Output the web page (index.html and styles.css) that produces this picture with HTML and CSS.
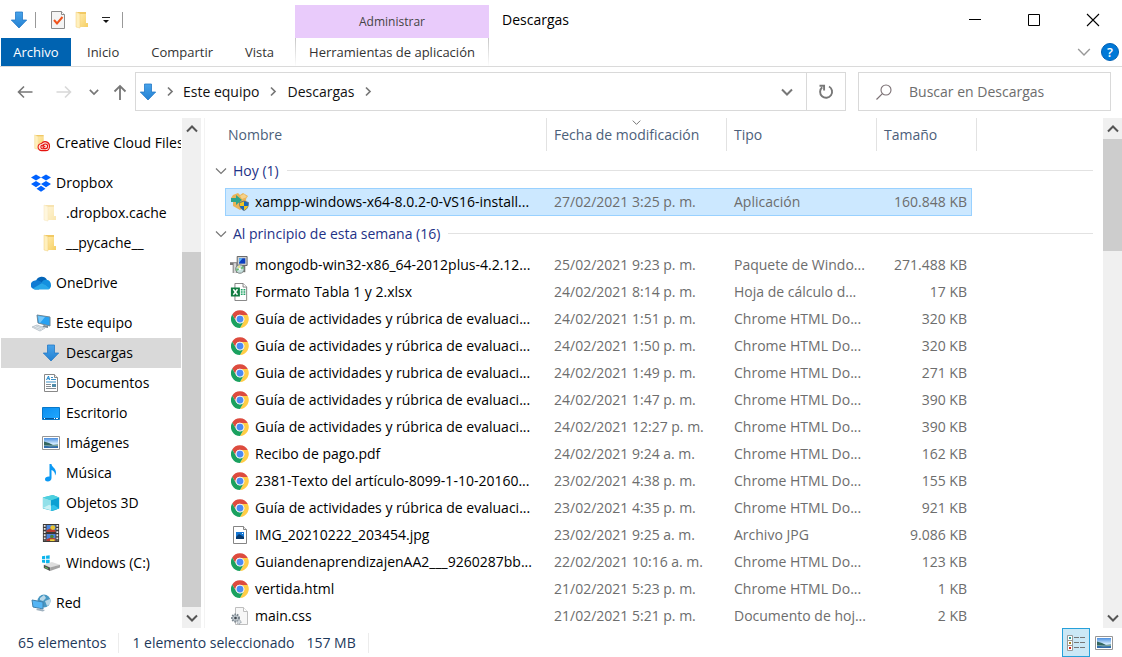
FILE: index.html
```html
<!DOCTYPE html>
<html lang="es">
<head>
<meta charset="utf-8">
<title>Descargas</title>
<meta name="viewport" content="width=device-width, initial-scale=1">
<link rel="stylesheet" href="styles.css">
</head>
<body class="window">

<svg class="sprite" aria-hidden="true">
  <defs>
    <linearGradient id="g-blue" x1="0" y1="0" x2="0" y2="1"><stop offset="0" stop-color="#48a3ea"/><stop offset="1" stop-color="#2381d2"/></linearGradient>
    <linearGradient id="g-fold" x1="0" y1="0" x2="1" y2="1"><stop offset="0" stop-color="#ffe9a6"/><stop offset="1" stop-color="#f5ce62"/></linearGradient>
    <linearGradient id="g-desk" x1="0" y1="0" x2="1" y2="1"><stop offset="0" stop-color="#0a8ef0"/><stop offset="1" stop-color="#22a9ff"/></linearGradient>
    <linearGradient id="g-sky" x1="0" y1="0" x2="0" y2="1"><stop offset="0" stop-color="#4b8fe0"/><stop offset=".6" stop-color="#d9efff"/></linearGradient>
  </defs>
  <symbol id="i-down" viewBox="0 0 18 18"><path d="M5.500 1h7v8h4.200L9 17 1.300 9h4.200z" fill="url(#g-blue)" stroke="#2379c6" stroke-width=".8"/></symbol>
  <symbol id="i-check" viewBox="0 0 16 18"><path d="M1.500.5h10l3 3v14h-13z" fill="#f4f4f4" stroke="#8c8c8c"/><path d="M11.500.5v3h3" fill="#fff" stroke="#8c8c8c"/><path d="M4 9l3 3.500L12.500 6" fill="none" stroke="#f0531c" stroke-width="2"/></symbol>
  <symbol id="i-folder" viewBox="0 0 18 18"><path d="M2 1h10v2H6z" fill="#f1c964"/><path d="M6 3h6v9h2v4H6z" fill="url(#g-fold)"/><path d="M2 1l4 2v14l-4-1z" fill="#fff0bd" stroke="#f0cf78" stroke-width=".5"/></symbol>
  <symbol id="i-cc" viewBox="0 0 20 20"><path d="M3 1h10v2H7z" fill="#f1c964"/><path d="M7 3h6v9h2v4H7z" fill="url(#g-fold)"/><path d="M3 1l4 2v14l-4-1z" fill="#fff0bd" stroke="#f0cf78" stroke-width=".5"/><g fill="none" stroke="#e5140f" stroke-width="1.200"><path d="M11 18.500a4 4 0 0 1-.5-8 5 5 0 0 1 9 3c0 3-2 5-4.500 5z" fill="#fbe6df"/><circle cx="14.800" cy="13.700" r="2.600"/><path d="M15 16.300h-3.500a1.900 1.900 0 1 1 .8-3.700l2.500 2"/></g></symbol>
  <symbol id="i-dropbox" viewBox="0 0 20 18"><g fill="#0062ff"><path d="M5 .5l5 3-5 3-5-3zM15 .5l5 3-5 3-5-3zM5 7l5 3-5 3.200-5-3.200zM15 7l5 3-5 3.200L10 10zM10 11.700l4.500 3-4.500 3-4.500-3z"/></g></symbol>
  <symbol id="i-onedrive" viewBox="0 0 20 14"><path d="M5 5a6 6 0 0 1 11-1l-3 6-8-2z" fill="#0364b8"/><path d="M4 4.500c3-1 5 .5 7 2L8 13.500H4.500A4.500 4.500 0 0 1 4 4.500z" fill="#0f7bd4"/><path d="M10.500 6.500c2-3 4-3 6-2.500 2 .3 3.500 2.500 3.500 5a4 4 0 0 1-2 4z" fill="#1490df"/><path d="M2 12.500L11 7l8 5.500c-1 1-2 1-3 1H4.500c-1 0-2-.4-2.500-1z" fill="#28a8ea"/></symbol>
  <symbol id="i-pc" viewBox="0 0 20 18"><path d="M6 1l13 2v9L7 9z" fill="#27a1f2" stroke="#6d8798"/><path d="M7 2l7 1-5 6-1-.5z" fill="#77c7f8"/><path d="M13 11l-2 2 6 1v-2z" fill="#7b8b96"/><path d="M1 13l5-2 8 3-5 3z" fill="#e9eef2" stroke="#bcc5cc"/><path d="M3 13l7 2.500M5 12l7 2.500" stroke="#b3bec6" stroke-width=".7"/></symbol>
  <symbol id="i-doc" viewBox="0 0 18 18"><path d="M2.500.5h10l3 3v14h-13z" fill="#fff" stroke="#888"/><path d="M12.500.5v3h3" fill="#eee" stroke="#888"/><path d="M4.500 6l2-4 1 4M5.500 4.700h2" stroke="#1c85cb" fill="none"/><path d="M9 3.500h2M9 5.500h5M4 8h10" stroke="#3c91c7"/><path d="M4 10.500h5M4 12.500h5M4 14.500h10" stroke="#848b91"/><path d="M10 10h4v3h-4z" fill="#4f8ba9"/></symbol>
  <symbol id="i-desktop" viewBox="0 0 18 18"><path d="M.5 3.500h17v12H.5z" fill="url(#g-desk)" stroke="#0878c9"/><path d="M1 14h16v1H1z" fill="#04569b"/><path d="M2 14.500h1M12 14.500h1M14 14.500h2" stroke="#fff"/></symbol>
  <symbol id="i-image" viewBox="0 0 18 18"><path d="M.5 2.500h17v13H.5z" fill="#fff" stroke="#969696"/><path d="M2 4h14v10H2z" fill="url(#g-sky)"/><path d="M2 7.500l5 1.500 5 2.500H2z" fill="#34665f"/><path d="M2 11.500l14-1V14H2z" fill="#316cab"/><path d="M2 11l7 .5 7-1v1.500l-8 .5-6-1z" fill="#85a992"/></symbol>
  <symbol id="i-music" viewBox="0 0 18 18"><path d="M7.500 0h2c0 3 4.500 4 4.500 8.500 0 1-.3 2-1 3 .3-3-1.200-4.500-3.500-5.500v8c0 2-1.600 3.500-3.800 3.500C4.200 17.500 3 16.700 3 15.300c0-2 2-3 4.500-2.800z" fill="#0b99f4"/></symbol>
  <symbol id="i-cube" viewBox="0 0 20 20"><path d="M1 4l11-3 7 3v12l-7 3-11-3z" fill="#36bad2"/><path d="M1 4l9 3v11l-9-2.500z" fill="#91e0e9"/><path d="M10 7l9-3v12l-9 2.500z" fill="#0ba0d3"/><path d="M1 4l11-3 7 3-9 3z" fill="#4cd0df"/><path d="M1 15.500L8 12l2 1v5z" fill="#c9f1f4"/><path d="M10 13l3-1 6 4-9 2.500z" fill="#32c2ea"/></symbol>
  <symbol id="i-video" viewBox="0 0 18 20"><path d="M0 0h18v20H0z" fill="#3c3938"/><path d="M4 1h10v8H4zM4 11h10v8H4z" fill="#4c85dc"/><path d="M4 7l4-2 6 2v2H4zM4 17l5-2 5 1v3H4z" fill="#b83c2e"/><circle cx="11" cy="4" r="2.700" fill="#e8c32e"/><circle cx="10" cy="14" r="2" fill="#4b8435"/><path d="M8 17h5v2H8z" fill="#ead73b"/><path d="M2 1v18M16 1v18" stroke="#e8e8e8" stroke-width="2" stroke-dasharray="2 1.500"/></symbol>
  <symbol id="i-drive" viewBox="0 0 20 18"><path d="M0 1.500L3.500 1v3.500H0zM4.500.9L8.500.4v4h-4zM0 5.500h3.500V9L0 8.500zM4.500 5.500h4v4.200l-4-.5z" fill="#0cb4ec"/><path d="M2 11l9-3 9 3-11 3.500z" fill="#dedede"/><path d="M2 11l7 3V18l-7-3.500z" fill="#505050"/><path d="M9 14L20 11v3L9 18z" fill="#a3a3a3"/><path d="M3.500 13.700l3 1.500" stroke="#5fe151"/></symbol>
  <symbol id="i-net" viewBox="0 0 20 18"><circle cx="13" cy="7" r="6.500" fill="#4897c2"/><path d="M9 4l4-3 2 3-3 3-3-1zM14 7l5-2v5l-3 2z" fill="#bad8e8"/><path d="M1 6l11 2v7L2 13z" fill="#55b5f4" stroke="#4080ac"/><path d="M7 14l-2 2 7 1.500 2-1.500-4-1z" fill="#9fb1bf"/></symbol>
  <symbol id="i-xampp" viewBox="0 0 18 18"><path d="M2 2l5-2 2 2 3-2 5 3-2 3 1 7-7 4-7-4V7L0 5z" fill="#e9b458"/><path d="M9 3l4-2 3 3-5 2z" fill="#f5d28b"/><path d="M0 5h5V2l6 5-6 5V9H0z" fill="#2ca58d"/><path d="M13 8l4.500 1.500c0 4-1 6.500-4.500 8-3.500-1.500-4.500-4-4.500-8z" fill="#1768ba" stroke="#5c6a75" stroke-width=".7"/><path d="M13 8.500V13H9l-.3-3zM13 13h4c-.5 2-2 3.500-4 4.200z" fill="#f2c522"/></symbol>
  <symbol id="i-msi" viewBox="0 0 20 20"><path d="M8 .5h11v10H8z" fill="#d0d0cf" stroke="#575757"/><path d="M10 2.500h7v6h-7z" fill="#0b3fc0"/><path d="M10 2.500h4l-4 5z" fill="#5cb8fa"/><path d="M0 7h8v12H3V10H0z" fill="#777"/><path d="M4 8h3v11H4z" fill="#d5d5d5"/><path d="M13 11h4v7h-4z" fill="#74746f"/><circle cx="11" cy="14.500" r="4.700" fill="#c5dfdd" stroke="#737c79"/><path d="M11 14.500l3-3.500 1.500 3zM11 14.500L7 17v-3z" fill="#65b96f"/><path d="M11 14.500V10l-3 2z" fill="#ece28f"/><circle cx="11" cy="14.500" r="1.200" fill="#fff"/></symbol>
  <symbol id="i-xls" viewBox="0 0 18 20"><path d="M4.500.5h9l4 4v15h-13z" fill="#fff" stroke="#777"/><path d="M13.500.5v4h4" fill="#fff" stroke="#777"/><path d="M0 5h10v10H0z" fill="#107c41"/><path d="M2.700 7l4.600 6M7.300 7l-4.600 6" stroke="#fff" stroke-width="1.600"/><path d="M11 7.500h2M14 7.500h2M11 10h2M14 10h2M11 12.500h2M14 12.500h2" stroke="#21a366" stroke-width="1.500"/></symbol>
  <symbol id="i-chrome" viewBox="0 0 48 48"><circle cx="24" cy="24" r="24" fill="#fff"/><path d="M3.200 12A24 24 0 0 1 44.800 13H24a11 11 0 0 0-10.400 17z" fill="#dd4b3e"/><path d="M44.800 13A24 24 0 0 1 24 48l10.400-18A12 12 0 0 0 24 13z" fill="#ffcd46"/><path d="M24 48A24 24 0 0 1 3.200 12l10.400 18A12 12 0 0 0 34.400 30z" fill="#1aa15f"/><circle cx="24" cy="24" r="11.500" fill="#f1f1f1"/><circle cx="24" cy="24" r="9" fill="#4a8af4"/></symbol>
  <symbol id="i-jpg" viewBox="0 0 18 18"><path d="M2.500.5h10l3 3v14h-13z" fill="#fff" stroke="#858585"/><path d="M12.500.5v3h3" fill="#eee" stroke="#858585"/><path d="M5 6h8v7H5z" fill="#1577d4"/><path d="M5 11l3-3 5 3v2H5z" fill="#083b70"/><path d="M11 7h1v1h-1z" fill="#fff"/></symbol>
  <symbol id="i-css" viewBox="0 0 18 18"><path d="M4.500.5h8l4 4v13h-12z" fill="#f7f7f7" stroke="#bebebe"/><path d="M12.500.5v4h4" fill="#fff" stroke="#bebebe"/><circle cx="4.500" cy="11" r="3.500" fill="#c3cbd1" stroke="#78838c" stroke-width="2" stroke-dasharray="1.500 1"/><circle cx="4.500" cy="11" r="1.300" fill="#3d454c"/><circle cx="8" cy="15" r="2" fill="#d2d9de" stroke="#88929a" stroke-dasharray="1 .8"/></symbol>
  <symbol id="i-chev-d" viewBox="0 0 12 12"><path d="M1 3.500l5 5 5-5" fill="none" stroke="currentColor" stroke-width="var(--w, 1.200)"/></symbol>
  <symbol id="i-chev-u" viewBox="0 0 12 12"><path d="M1 8.500l5-5 5 5" fill="none" stroke="currentColor" stroke-width="var(--w, 1.200)"/></symbol>
  <symbol id="i-chev-r" viewBox="0 0 8 12"><path d="M2 1.500l4 4-4 4" fill="none" stroke="currentColor" stroke-width="1.700"/></symbol>
</svg>

<header class="ribbon">
  <div class="quick">
    <svg class="ic18"><use href="#i-down"/></svg>
    <span class="bar"></span>
    <button class="plain" aria-label="Propiedades"><svg class="ic18"><use href="#i-check"/></svg></button>
    <button class="plain" aria-label="Nueva carpeta"><svg class="ic18"><use href="#i-folder"/></svg></button>
    <button class="plain" aria-label="Personalizar barra"><svg class="more" viewBox="0 0 8 8"><path d="M0 1.500h8" stroke="#222"/><path d="M1 4h6L4 7z" fill="#111"/></svg></button>
    <span class="bar"></span>
  </div>
  <div class="context-title">Administrar</div>
  <div class="caption">
    <h1 class="title">Descargas</h1>
    <div class="win-buttons">
      <button class="plain" aria-label="Minimizar"><svg class="win" viewBox="0 0 14 14"><path d="M1 6.500h12" stroke="#000"/></svg></button>
      <button class="plain" aria-label="Maximizar"><svg class="win" viewBox="0 0 14 14"><path d="M1.500 1.500h11v11h-11z" fill="none" stroke="#000"/></svg></button>
      <button class="plain" aria-label="Cerrar"><svg class="win" viewBox="0 0 14 14"><path d="M1 1l12 12M13 1L1 13" stroke="#000" stroke-width="1.100"/></svg></button>
    </div>
  </div>
  <nav class="tabs">
    <button class="tab tab-file">Archivo</button>
    <button class="tab">Inicio</button>
    <button class="tab">Compartir</button>
    <button class="tab">Vista</button>
  </nav>
  <button class="tab context-tab">Herramientas de aplicación</button>
  <div class="ribbon-end">
    <button class="plain faint" aria-label="Expandir cinta"><svg class="ic14"><use href="#i-chev-d"/></svg></button>
    <button class="help" aria-label="Ayuda">?</button>
  </div>
</header>

<div class="navbar">
  <div class="history">
    <button class="plain" aria-label="Atrás"><svg class="arrow" viewBox="0 0 16 16"><path d="M15.500 8H1.500M7 2.500L1.500 8 7 13.500" fill="none" stroke="#777" stroke-width="1.600"/></svg></button>
    <button class="plain forward" aria-label="Adelante"><svg class="arrow" viewBox="0 0 16 16"><path d="M.5 8h14M9 2.500L14.500 8 9 13.500" fill="none" stroke="#d8d8d8" stroke-width="1.600"/></svg></button>
    <button class="plain grey bold recent" aria-label="Ubicaciones recientes"><svg class="ic10"><use href="#i-chev-d"/></svg></button>
    <button class="plain" aria-label="Subir"><svg class="arrow" viewBox="0 0 16 16"><path d="M8 16V2M2.500 7.500L8 2l5.500 5.500" fill="none" stroke="#777" stroke-width="1.800"/></svg></button>
  </div>
  <div class="address">
    <svg class="ic18"><use href="#i-down"/></svg>
    <svg class="crumb-sep"><use href="#i-chev-r"/></svg>
    <a class="crumb" href="#equipo">Este equipo</a>
    <svg class="crumb-sep"><use href="#i-chev-r"/></svg>
    <a class="crumb" href="#descargas">Descargas</a>
    <svg class="crumb-sep"><use href="#i-chev-r"/></svg>
    <span class="grow"></span>
    <button class="addr-btn addr-drop bold" aria-label="Ubicaciones anteriores"><svg class="ic12"><use href="#i-chev-d"/></svg></button>
    <button class="addr-btn addr-refresh" aria-label="Actualizar"><svg class="ic16" viewBox="0 0 16 16"><path d="M4.200 3.200A6 6 0 1 0 11 2.500" fill="none" stroke="#777" stroke-width="1.900"/><path d="M1.500 1.800h4.600v4.600" fill="none" stroke="#777" stroke-width="1.900"/></svg></button>
  </div>
  <label class="search">
    <svg class="ic16" viewBox="0 0 16 16"><circle cx="10" cy="6" r="5" fill="none" stroke="#7b7074" stroke-width="1.100"/><path d="M6.400 9.600L.5 15.500" stroke="#7b7074" stroke-width="1.200"/></svg>
    <input class="search-input" type="search" placeholder="Buscar en Descargas" aria-label="Buscar en Descargas">
  </label>
</div>

<div class="body">
  <aside class="side">
    <nav class="tree" aria-label="Panel de navegación">
      <a class="node root" href="#cc"><svg class="ic20"><use href="#i-cc"/></svg>Creative Cloud Files</a>
      <a class="node root" href="#dropbox"><svg class="ic20"><use href="#i-dropbox"/></svg>Dropbox</a>
      <a class="node child" href="#cache"><svg class="ic18 dim"><use href="#i-folder"/></svg>.dropbox.cache</a>
      <a class="node child" href="#py"><svg class="ic18"><use href="#i-folder"/></svg>__pycache__</a>
      <a class="node root" href="#onedrive"><svg class="ic20"><use href="#i-onedrive"/></svg>OneDrive</a>
      <a class="node root" href="#equipo"><svg class="ic20"><use href="#i-pc"/></svg>Este equipo</a>
      <a class="node child current" href="#descargas"><svg class="ic18"><use href="#i-down"/></svg>Descargas</a>
      <a class="node child" href="#documentos"><svg class="ic18"><use href="#i-doc"/></svg>Documentos</a>
      <a class="node child" href="#escritorio"><svg class="ic18"><use href="#i-desktop"/></svg>Escritorio</a>
      <a class="node child" href="#imagenes"><svg class="ic18"><use href="#i-image"/></svg>Imágenes</a>
      <a class="node child" href="#musica"><svg class="ic18"><use href="#i-music"/></svg>Música</a>
      <a class="node child" href="#objetos"><svg class="ic18"><use href="#i-cube"/></svg>Objetos 3D</a>
      <a class="node child" href="#videos"><svg class="ic18"><use href="#i-video"/></svg>Videos</a>
      <a class="node child" href="#c"><svg class="ic18"><use href="#i-drive"/></svg>Windows (C:)</a>
      <a class="node root" href="#red"><svg class="ic20"><use href="#i-net"/></svg>Red</a>
    </nav>
    <div class="scroll scroll-side">
      <button class="scroll-btn" aria-label="Desplazar arriba"><svg class="ic12"><use href="#i-chev-u"/></svg></button>
      <span class="before"></span><span class="thumb"></span><span class="after"></span>
      <button class="scroll-btn" aria-label="Desplazar abajo"><svg class="ic12"><use href="#i-chev-d"/></svg></button>
    </div>
  </aside>

  <main class="list">
    <table class="files">
      <colgroup><col class="c-gutter"><col class="c-name"><col class="c-date"><col class="c-type"><col class="c-size"><col class="c-edge"><col></colgroup>
      <thead>
        <tr>
          <td></td>
          <th scope="col"><div class="head head-name">Nombre</div></th>
          <th scope="col"><div class="head">Fecha de modificación<svg class="sort"><use href="#i-chev-d"/></svg></div></th>
          <th scope="col"><div class="head">Tipo</div></th>
          <th scope="col"><div class="head">Tamaño</div></th>
          <td><div class="head head-edge"></div></td>
          <td></td>
        </tr>
      </thead>
      <tbody>
        <tr class="group"><th colspan="7" scope="rowgroup"><div class="group-line"><svg class="ic12"><use href="#i-chev-d"/></svg><span>Hoy (1)</span><i class="rule"></i></div></th></tr>
        <tr class="selected"><td></td><td><div class="name"><svg class="ic18"><use href="#i-xampp"/></svg>xampp-windows-x64-8.0.2-0-VS16-install...</div></td><td>27/02/2021 3:25 p. m.</td><td>Aplicación</td><td class="size">160.848 KB</td></tr>
      </tbody>
      <tbody>
        <tr class="group"><th colspan="7" scope="rowgroup"><div class="group-line"><svg class="ic12"><use href="#i-chev-d"/></svg><span>Al principio de esta semana (16)</span><i class="rule"></i></div></th></tr>
        <tr><td></td><td><div class="name"><svg class="ic20"><use href="#i-msi"/></svg>mongodb-win32-x86_64-2012plus-4.2.12...</div></td><td>25/02/2021 9:23 p. m.</td><td>Paquete de Windo...</td><td class="size">271.488 KB</td></tr>
        <tr><td></td><td><div class="name"><svg class="ic20"><use href="#i-xls"/></svg>Formato Tabla 1 y 2.xlsx</div></td><td>24/02/2021 8:14 p. m.</td><td>Hoja de cálculo d...</td><td class="size">17 KB</td></tr>
        <tr><td></td><td><div class="name"><svg class="ic18"><use href="#i-chrome"/></svg>Guía de actividades y rúbrica de evaluaci...</div></td><td>24/02/2021 1:51 p. m.</td><td>Chrome HTML Do...</td><td class="size">320 KB</td></tr>
        <tr><td></td><td><div class="name"><svg class="ic18"><use href="#i-chrome"/></svg>Guía de actividades y rúbrica de evaluaci...</div></td><td>24/02/2021 1:50 p. m.</td><td>Chrome HTML Do...</td><td class="size">320 KB</td></tr>
        <tr><td></td><td><div class="name"><svg class="ic18"><use href="#i-chrome"/></svg>Guia de actividades y rubrica de evaluaci...</div></td><td>24/02/2021 1:49 p. m.</td><td>Chrome HTML Do...</td><td class="size">271 KB</td></tr>
        <tr><td></td><td><div class="name"><svg class="ic18"><use href="#i-chrome"/></svg>Guía de actividades y rúbrica de evaluaci...</div></td><td>24/02/2021 1:47 p. m.</td><td>Chrome HTML Do...</td><td class="size">390 KB</td></tr>
        <tr><td></td><td><div class="name"><svg class="ic18"><use href="#i-chrome"/></svg>Guía de actividades y rúbrica de evaluaci...</div></td><td>24/02/2021 12:27 p. m.</td><td>Chrome HTML Do...</td><td class="size">390 KB</td></tr>
        <tr><td></td><td><div class="name"><svg class="ic18"><use href="#i-chrome"/></svg>Recibo de pago.pdf</div></td><td>24/02/2021 9:24 a. m.</td><td>Chrome HTML Do...</td><td class="size">162 KB</td></tr>
        <tr><td></td><td><div class="name"><svg class="ic18"><use href="#i-chrome"/></svg>2381-Texto del artículo-8099-1-10-20160...</div></td><td>23/02/2021 4:38 p. m.</td><td>Chrome HTML Do...</td><td class="size">155 KB</td></tr>
        <tr><td></td><td><div class="name"><svg class="ic18"><use href="#i-chrome"/></svg>Guía de actividades y rúbrica de evaluaci...</div></td><td>23/02/2021 4:35 p. m.</td><td>Chrome HTML Do...</td><td class="size">921 KB</td></tr>
        <tr><td></td><td><div class="name"><svg class="ic18"><use href="#i-jpg"/></svg>IMG_20210222_203454.jpg</div></td><td>23/02/2021 9:25 a. m.</td><td>Archivo JPG</td><td class="size">9.086 KB</td></tr>
        <tr><td></td><td><div class="name"><svg class="ic18"><use href="#i-chrome"/></svg>GuiandenaprendizajenAA2___9260287bb...</div></td><td>22/02/2021 10:16 a. m.</td><td>Chrome HTML Do...</td><td class="size">123 KB</td></tr>
        <tr><td></td><td><div class="name"><svg class="ic18"><use href="#i-chrome"/></svg>vertida.html</div></td><td>21/02/2021 5:23 p. m.</td><td>Chrome HTML Do...</td><td class="size">1 KB</td></tr>
        <tr><td></td><td><div class="name"><svg class="ic18"><use href="#i-css"/></svg>main.css</div></td><td>21/02/2021 5:21 p. m.</td><td>Documento de hoj...</td><td class="size">2 KB</td></tr>
      </tbody>
    </table>
  </main>
  <div class="scroll scroll-main">
    <button class="scroll-btn" aria-label="Desplazar arriba"><svg class="ic12"><use href="#i-chev-u"/></svg></button>
    <span class="before"></span><span class="thumb"></span><span class="after"></span>
    <button class="scroll-btn" aria-label="Desplazar abajo"><svg class="ic12"><use href="#i-chev-d"/></svg></button>
  </div>
</div>

<footer class="status">
  <span class="stat">65 elementos</span>
  <span class="stat"><span>1 elemento seleccionado</span><span>157 MB</span></span>
  <span class="grow"></span>
  <button class="view view-on" aria-label="Detalles" aria-pressed="true"><svg class="ic18" viewBox="0 0 18 18"><path d="M.5 1.500h5v15h-5zM.5 6.500h5M.5 11.500h5" fill="#fff" stroke="#999"/><path d="M2 3h2v2H2z" fill="#2f9c99"/><path d="M2 8h2v2H2z" fill="#a88322"/><path d="M2 13h2v2H2z" fill="#d22a1c"/><path d="M7 3.500h5M13 3.500h5M7 8.500h5M13 8.500h5M7 13.500h5M13 13.500h5" stroke="#777"/></svg></button>
  <button class="view" aria-label="Iconos grandes"><svg class="ic18"><use href="#i-image"/></svg></button>
</footer>
</body>
</html>
```
FILE: styles.css
```css
*, *::before, *::after { box-sizing: border-box; }

.window {
  margin: 0;
  height: 100vh;
  display: flex;
  flex-direction: column;
  overflow: hidden;
  background: #fff;
  color: #111;
  font: 14px/20px "Open Sans", "Noto Sans", sans-serif;
}
.sprite { position: absolute; width: 0; height: 0; }
svg { display: block; flex: none; overflow: visible; }
button, input { font: inherit; color: inherit; }
a { color: inherit; text-decoration: none; }
.grow { flex: 1; }
.plain { display: flex; padding: 0; border: 0; background: none; }
.ic10 { width: 10px; height: 10px; }
.ic12 { width: 12px; height: 12px; }
.ic14 { width: 14px; height: 14px; }
.ic16 { width: 16px; height: 16px; }
.ic18 { width: 18px; height: 18px; }
.ic20 { width: 20px; height: 18px; }
.grey { color: #777; }
.faint { color: #999; }
.bold { --w: 2; }
.dim { opacity: .5; }

/* Title bar and ribbon */
.ribbon {
  display: grid;
  grid-template-columns: 295px 194px 1fr;
  grid-template-rows: 38px 28px;
  border-bottom: 1px solid #dadada;
}
.quick { display: flex; align-items: center; gap: 7px; padding-left: 10px; padding-top: 2px; }
.bar { width: 1px; height: 16px; background: #999; }
.quick .bar + .plain { margin-left: 6px; }
.more { width: 8px; height: 8px; margin: 0 5px 0 3px; }
.context-title {
  margin-top: 5px;
  background: #e9cbfb;
  color: #444;
  font-size: 12px;
  line-height: 34px;
  text-align: center;
}
.caption { display: flex; justify-content: space-between; align-items: center; padding: 1px 22px 0 13px; }
.title { margin: 0; font-size: 14px; font-weight: 400; color: #000; }
.win-buttons { display: flex; gap: 45px; }
.win { width: 14px; height: 14px; }
.tabs { display: flex; padding-left: 1px; }
.tab {
  padding: 0 16px;
  border: 0;
  background: none;
  color: #333;
  font-size: 13px;
  line-height: 28px;
  white-space: nowrap;
}
.tab-file { width: 70px; padding: 0; background: #0063b1; color: #fff; }
.context-tab {
  padding: 0;
  border: solid;
  border-width: 0 1px;
  border-image: linear-gradient(#c4c4c4, #fff) 1;
}
.ribbon-end { display: flex; justify-content: flex-end; align-items: center; gap: 10px; padding-right: 3px; }
.help {
  width: 18px;
  height: 18px;
  padding: 0;
  border: 1px solid #0061b5;
  border-radius: 50%;
  background: #0078d7;
  color: #fff;
  font-size: 13px;
  font-weight: 600;
  line-height: 16px;
}

/* Address row */
.navbar { display: flex; padding: 5px 11px 7px 17px; }
.history { display: flex; align-items: center; width: 118px; }
.forward { margin-left: 23px; }
.recent { margin: 0 13px 0 17px; }
.arrow { width: 16px; height: 16px; }
.address, .search { display: flex; align-items: center; height: 39px; border: 1px solid #d9d9d9; }
.address { flex: 1; margin-right: 12px; padding-left: 3px; }
.crumb-sep { width: 8px; height: 12px; margin: 0 10px; color: #777; }
.ic18 + .crumb-sep { margin: 0 9px; }
.crumb { color: #111; }
.addr-btn { display: flex; align-items: center; justify-content: center; align-self: stretch; padding: 0; border: 0; background: none; color: #777; }
.addr-drop { width: 38px; }
.addr-refresh { width: 39px; border-left: 1px solid #d9d9d9; }
.search { width: 253px; padding-left: 17px; gap: 17px; }
.search-input { flex: 1; min-width: 0; padding: 0; border: 0; outline: 0; background: none; }
.search-input::placeholder { color: #6d6d6d; opacity: 1; }

/* Navigation pane and file list */
.body { flex: 1; display: flex; min-height: 0; overflow: hidden; }
.side { display: flex; flex: none; width: 205px; padding-right: 3px; border-right: 1px solid #f3f3f3; }
.tree { flex: 1; min-width: 0; padding: 0 1px; overflow: hidden; }
.node { display: flex; align-items: center; height: 30px; gap: 6px; white-space: nowrap; overflow: hidden; color: #000; }
.root { margin-top: 10px; padding-left: 30px; gap: 5px; }
.child { padding-left: 41px; }
.current { background: #d9d9d9; }

.scroll { --w: 2; display: flex; flex-direction: column; flex: none; width: 19px; background: #f0f0f0; }
.scroll-btn { display: flex; align-items: center; justify-content: center; height: 21px; padding: 0; border: 0; background: none; color: #555; }
.thumb { background: #cdcdcd; }
.scroll-side .before { flex: 113; }
.scroll-side .thumb { flex: 355; }
.scroll-main .thumb { flex: 112; }
.scroll-main .after { flex: 356; }

.list { flex: 1; min-width: 0; overflow: hidden; padding: 0 10px; }
.files { width: 100%; table-layout: fixed; border-spacing: 0; color: #6d6d6d; }
.c-gutter { width: 10px; }
.c-name { width: 321px; }
.c-date { width: 180px; }
.c-type { width: 150px; }
.c-size { width: 96px; }
.c-edge { width: 5px; }
.files td, .files th { height: 27px; padding: 0; font-weight: 400; text-align: left; white-space: nowrap; }
.files td:nth-child(n+3) { padding-left: 8px; }
.files .size { padding: 0 5px 0 0; text-align: right; }
.files thead th, .files thead td { height: 35px; padding: 0; vertical-align: top; }
.files thead td:nth-child(n) { padding: 0; }
.head { position: relative; height: 33px; padding-left: 7px; border-left: 1px solid #e2e2e2; color: #4c607a; line-height: 33px; }
.head-name { padding-left: 3px; border-left: 0; }
.head-edge { padding: 0; border-left: 0; border-right: 1px solid #e2e2e2; }
.sort { position: absolute; top: 0; left: 50%; width: 9px; height: 9px; margin-left: -5px; color: #666; }
.files .group th { height: 35px; }
.group-line { display: flex; align-items: center; gap: 6px; color: #1e3287; }
.group-line svg { color: #777; }
.rule { flex: 1; height: 1px; margin-left: 2px; background: #e2e2e2; }
.name { display: flex; align-items: center; gap: 6px; padding-left: 6px; color: #000; }
.name .ic20 { margin-left: -2px; }
.selected td:nth-child(n+2) { background: #cce8ff; border: solid #99d1ff; border-width: 1px 0; }
.files .selected td { height: 28px; }
.selected td:nth-child(2) { border-left-width: 1px; }
.selected .name { padding-left: 5px; }
.files .selected .size { border-right-width: 1px; padding-right: 4px; }

/* Status bar */
.status { display: flex; align-items: center; height: 29px; padding: 0 4px 0 18px; color: #1e395b; }
.stat { display: flex; gap: 12px; padding-right: 12px; margin-right: 13px; border-right: 1px solid #ececec; }
.view { display: flex; align-items: center; justify-content: center; width: 28px; height: 29px; padding: 0; border: 1px solid transparent; background: none; }
.view-on { border-color: #26a0da; background: #cbe8f6; }
```
